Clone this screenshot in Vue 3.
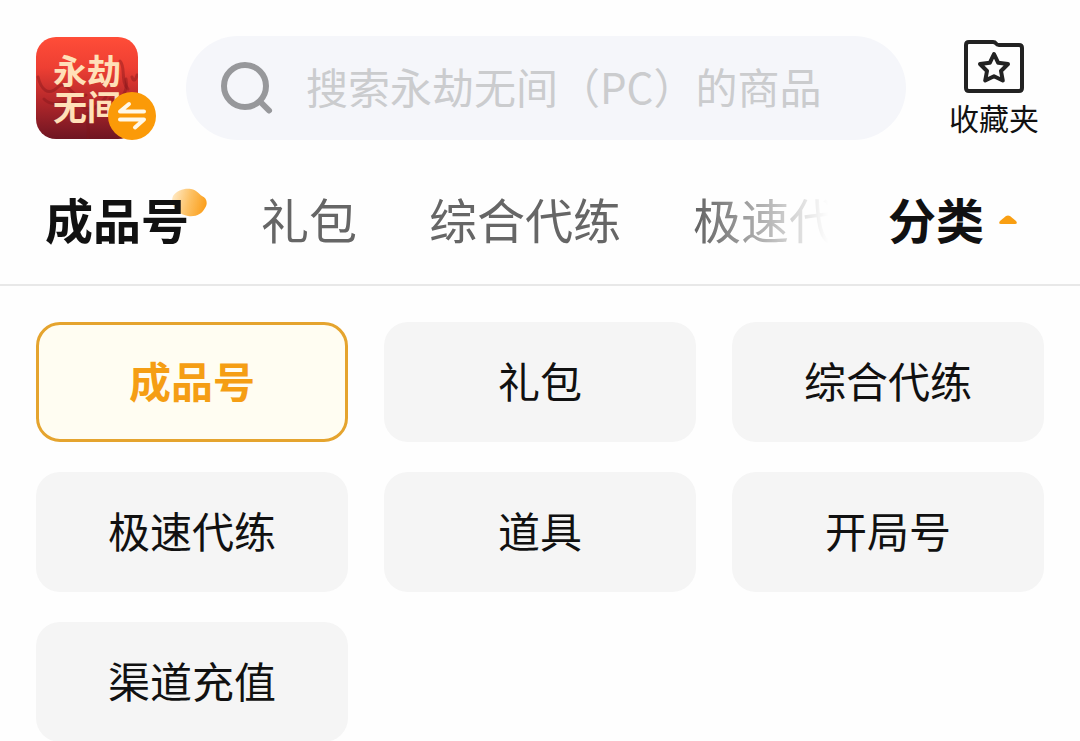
<script setup>
import { ref } from 'vue'

const categories = ['成品号', '礼包', '综合代练', '极速代练', '道具', '开局号', '渠道充值']
const tabs = categories.slice(0, 4)

const active   = ref('成品号')
const keyword  = ref('')
const expanded = ref(true)
</script>

<template>
  <div class="page">
    <header class="header">
      <button type="button" class="game" aria-label="切换游戏">
        <svg class="game-art" viewBox="0 0 102 102" aria-hidden="true">
          <g fill="none" stroke="#7d1519" stroke-opacity="0.4" stroke-width="3" stroke-linecap="round">
            <path d="M2 40C5 52 12 60 22 50C30 40 38 66 50 58" />
            <path d="M8 62C20 74 32 58 44 68C54 76 62 70 70 60" />
            <path d="M74 62C86 66 92 54 90 42" />
            <path d="M96 40C98 46 100 42 101 38" />
            <path d="M84 24C90 30 84 44 92 52" />
            <path d="M52 76C50 86 54 92 52 101" />
          </g>
        </svg>
        <span class="game-name">永劫<br>无间</span>
        <svg class="game-switch" viewBox="0 0 48 48" aria-hidden="true">
          <circle cx="24" cy="24" r="24" fill="#fb9a08" />
          <g fill="none" stroke="#fff8e8" stroke-width="4" stroke-linecap="round" stroke-linejoin="round">
            <path d="M36 19.5H12L21 12" />
            <path d="M12 27.5H36L27 35.500" />
          </g>
        </svg>
      </button>

      <label class="search">
        <svg class="search-icon" viewBox="0 0 54 54" aria-hidden="true">
          <g fill="none" stroke="#97989b" stroke-width="6" stroke-linecap="round">
            <circle cx="25" cy="25" r="21" />
            <path d="M41 41.500L49 49.500" />
          </g>
        </svg>
        <input v-model="keyword" type="search" placeholder="搜索永劫无间（PC）的商品" aria-label="搜索商品" />
      </label>

      <a href="#" class="favorites">
        <svg class="favorites-icon" viewBox="0 0 60 54" aria-hidden="true">
          <g fill="none" stroke="#222" stroke-width="4" stroke-linejoin="round">
            <path d="M5 3H29Q31 3 32 4.500Q33 6 35 6H55Q58 6 58 9V49Q58 52 55 52H5Q2 52 2 49V6Q2 3 5 3Z" />
            <path d="M30 15L34.200 23.800L44 25L37 32L38.800 41.500L30 37.300L21.200 41.500L23 32L16 25L25.800 23.800Z" />
          </g>
        </svg>
        <span>收藏夹</span>
      </a>
    </header>

    <nav class="nav">
      <div class="tabs">
        <button
          v-for="tab in tabs"
          :key="tab"
          type="button"
          class="tab"
          :class="{ active: tab === active }"
          @click="active = tab"
        >
          <svg v-if="tab === active" class="tab-mark" viewBox="0 0 36 30" aria-hidden="true">
            <defs>
              <linearGradient id="mark" x1="0" y1="0.300" x2="1" y2="0.500">
                <stop offset="0" stop-color="#ffe9c4" />
                <stop offset="0.500" stop-color="#fdc164" />
                <stop offset="1" stop-color="#fb9f1c" />
              </linearGradient>
            </defs>
            <path fill="url(#mark)" d="M2 8C6 2 14 0 20 1C26 2 28 6 31 8C36 10 37 16 34 20C31 26 25 29 17 28C8 27-2 18 2 8Z" />
          </svg>
          <span class="tab-text">{{ tab }}</span>
        </button>
      </div>
      <button type="button" class="toggle" :aria-expanded="expanded" @click="expanded = !expanded">
        分类
        <svg class="toggle-arrow" :class="{ down: !expanded }" viewBox="0 0 18 10" aria-hidden="true">
          <path fill="#f99f12" d="M1 6L7 1Q9 0 11 1L17 6Q19 9 16 9H2Q-1 9 1 6Z" />
        </svg>
      </button>
    </nav>

    <main v-if="expanded" class="grid">
      <button
        v-for="item in categories"
        :key="item"
        type="button"
        class="chip"
        :class="{ active: item === active }"
        @click="active = item"
      >{{ item }}</button>
    </main>
  </div>
</template>

<style>
body {
  margin: 0;
  background: #fefefe;
}
</style>

<style scoped>
.page {
  font-family: "Noto Sans CJK SC", sans-serif;
  color: #111;
}

button {
  margin: 0;
  padding: 0;
  border: 0;
  background: none;
  color: inherit;
  font-family: inherit;
  cursor: pointer;
}

.header {
  display: flex;
  align-items: center;
  padding: 36px 41px 0 36px;
}

.game {
  position: relative;
  flex: none;
  width: 102px;
  height: 102px;
  margin-right: 48px;
  border-radius: 20px;
  background: linear-gradient(#ff4d38, #ee3f33 30%, #b5282b 62%, #6f1522);
}

.game-art {
  position: absolute;
  inset: 0;
}

.game-name {
  position: relative;
  display: block;
  color: #ffe0b8;
  font-size: 34px;
  font-weight: 700;
  line-height: 36px;
}

.game-switch {
  position: absolute;
  right: -18px;
  bottom: -1px;
  width: 48px;
  height: 48px;
}

.search {
  display: flex;
  flex: 1;
  align-items: center;
  min-width: 0;
  height: 104px;
  padding: 0 34px;
  box-sizing: border-box;
  border-radius: 52px;
  background: #f5f6fa;
}

.search-icon {
  flex: none;
  width: 54px;
  height: 54px;
  margin-right: 32px;
}

.search input {
  flex: 1;
  min-width: 0;
  padding: 0 0 4px;
  border: 0;
  outline: 0;
  background: none;
  color: #111;
  font-family: inherit;
  font-size: 42px;
  line-height: 60px;
}

.search input::placeholder {
  color: #cbccce;
  opacity: 1;
}

.favorites {
  display: flex;
  flex: none;
  flex-direction: column;
  align-items: center;
  gap: 4px;
  margin-left: 43px;
  color: #111;
  font-size: 30px;
  line-height: 40px;
  text-decoration: none;
}

.favorites-icon {
  width: 60px;
  height: 54px;
}

.nav {
  display: flex;
  align-items: center;
  padding: 42px 63px 30px 45px;
  border-bottom: 2px solid #e8e8e8;
  font-size: 48px;
  line-height: 72px;
}

.tabs {
  display: flex;
  flex: 1;
  gap: 72px;
  min-width: 0;
  overflow: hidden;
  -webkit-mask-image: linear-gradient(to left, transparent, #000 130px);
  mask-image: linear-gradient(to left, transparent, #000 130px);
}

.tab {
  position: relative;
  flex: none;
  color: #666;
  font-size: inherit;
  line-height: inherit;
}

.tab.active {
  color: #111;
  font-weight: 700;
}

.tab-mark {
  position: absolute;
  top: 6px;
  right: -18px;
  width: 36px;
  height: 30px;
}

.tab-text {
  position: relative;
}

.toggle {
  display: flex;
  flex: none;
  align-items: center;
  gap: 15px;
  margin-left: 60px;
  font-size: inherit;
  font-weight: 700;
  line-height: inherit;
}

.toggle-arrow {
  width: 18px;
  height: 10px;
  margin-top: 4px;
}

.toggle-arrow.down {
  transform: rotate(180deg);
}

.grid {
  display: grid;
  grid-template-columns: repeat(3, 1fr);
  gap: 30px 36px;
  padding: 36px 36px 0;
}

.chip {
  height: 120px;
  padding-bottom: 4px;
  border-radius: 24px;
  background: #f5f5f5;
  font-size: 42px;
  line-height: 60px;
}

.chip.active {
  border: 3px solid #e5a42e;
  background: #fffdf2;
  color: #f59e14;
  font-weight: 700;
}
</style>
